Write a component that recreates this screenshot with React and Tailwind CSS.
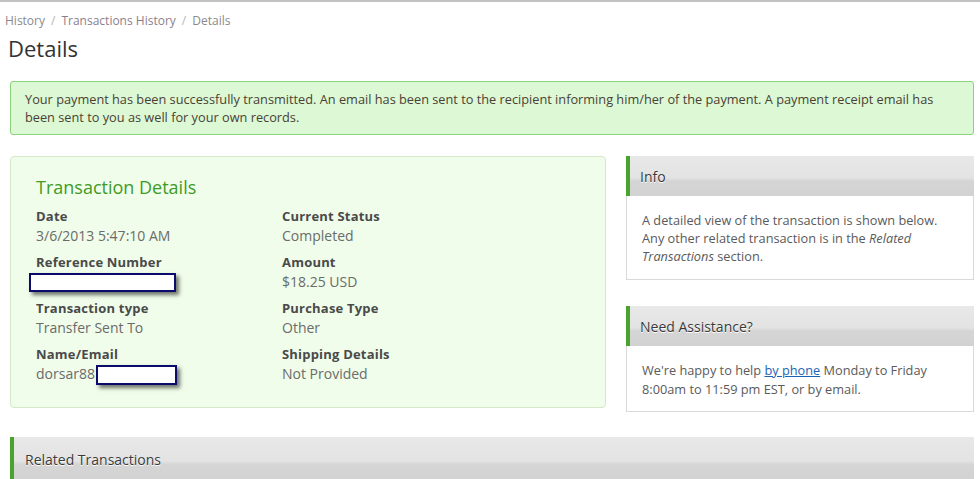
import React from "react";

const Field = ({ label, children }) => (
  <div className="mb-[7px]">
    <p className="text-[13px] leading-[18px] font-bold text-[#4a4a4a] tracking-[0.2px]">{label}</p>
    <div className="mt-[1px] text-[14px] leading-[20px] text-[#6b6b6b]">{children}</div>
  </div>
);

const Redact = ({ className }) => (
  <span
    className={`inline-block align-top bg-white border-2 border-[#0b0b6b] shadow-[3px_3px_4px_rgba(0,0,0,0.55)] ${className}`}
  />
);

const PanelHeader = ({ title, className = "" }) => (
  <div
    className={`h-[40px] flex items-center border-l-4 border-[#4aa32c] bg-[linear-gradient(to_bottom,#e8e8e8_0%,#e3e3e3_55%,#d5d5d5_62%,#d2d2d2_100%)] text-[14px] text-[#3a3a3a] [text-shadow:0_1px_0_#fff] ${className}`}
  >
    {title}
  </div>
);

export default function App() {
  return (
    <div className="font-['Open_Sans',sans-serif] bg-white w-[980px] h-[479px] overflow-hidden border-t-2 border-[#c2c2c2]">
      <div className="pl-[5px] pt-[10px] text-[12px] leading-[17px] text-[#8a8a8a] flex gap-[6px]">
        <span>History</span>
        <span className="text-[#b5b5b5]">/</span>
        <span className="text-[#8c7f8c]">Transactions History</span>
        <span className="text-[#b5b5b5]">/</span>
        <span>Details</span>
      </div>
      <h1 className="ml-[8px] mt-[4px] text-[22px] leading-[30px] text-[#333]">Details</h1>

      <div className="ml-[10px] mt-[18px] w-[964px] h-[54px] border border-[#8ed37c] rounded-[3px] bg-[#dcf8d4] px-[14px] pt-[8px] text-[12.75px] leading-[18px] text-[#4b3f35]">
        Your payment has been successfully transmitted. An email has been sent to the recipient informing him/her of the payment. A payment receipt email has been sent to you as well for your own records.
      </div>

      <div className="ml-[10px] mt-[21px] flex gap-[20px]">
        <div className="w-[596px] h-[252px] border border-[#d4e8cc] rounded-[4px] bg-[#f0fdea] pl-[25px] pt-[18px]">
          <h2 className="text-[18px] leading-[24px] text-[#3f9a26]">Transaction Details</h2>
          <div className="mt-[8px] grid grid-cols-[246px_246px]">
            <div>
              <Field label="Date">3/6/2013 5:47:10 AM</Field>
              <Field label="Reference Number">
                <Redact className="-ml-[7px] mt-[1px] w-[147px] h-[19px]" />
              </Field>
              <Field label="Transaction type">Transfer Sent To</Field>
              <Field label="Name/Email">
                <span className="flex items-start">
                  dorsar88
                  <Redact className="ml-[1px] mt-[1px] w-[81px] h-[20px]" />
                </span>
              </Field>
            </div>
            <div>
              <Field label="Current Status">Completed</Field>
              <Field label="Amount">$18.25 USD</Field>
              <Field label="Purchase Type">Other</Field>
              <Field label="Shipping Details">Not Provided</Field>
            </div>
          </div>
        </div>

        <div className="w-[348px] flex flex-col">
          <PanelHeader title="Info" className="pl-[10px]" />
          <div className="h-[84px] border border-t-0 border-[#d9d9d9] pl-[15px] pr-[15px] pt-[15px] text-[12.75px] leading-[18px] text-[#5a5a5a]">
            A detailed view of the transaction is shown below. Any other related transaction is in the{" "}
            <i>Related Transactions</i> section.
          </div>

          <PanelHeader title="Need Assistance?" className="mt-[26px] pl-[10px]" />
          <div className="h-[66px] border border-t-0 border-[#d9d9d9] pl-[15px] pr-[15px] pt-[15px] text-[12.75px] leading-[19px] text-[#5a5a5a]">
            We're happy to help{" "}
            <a href="#" className="text-[#1b63b8] underline">by phone</a> Monday to Friday 8:00am to 11:59 pm EST, or by email.
          </div>
        </div>
      </div>

      <PanelHeader title="Related Transactions" className="ml-[10px] mt-[25px] w-[964px] h-[44px] pl-[11px]" />
    </div>
  );
}
